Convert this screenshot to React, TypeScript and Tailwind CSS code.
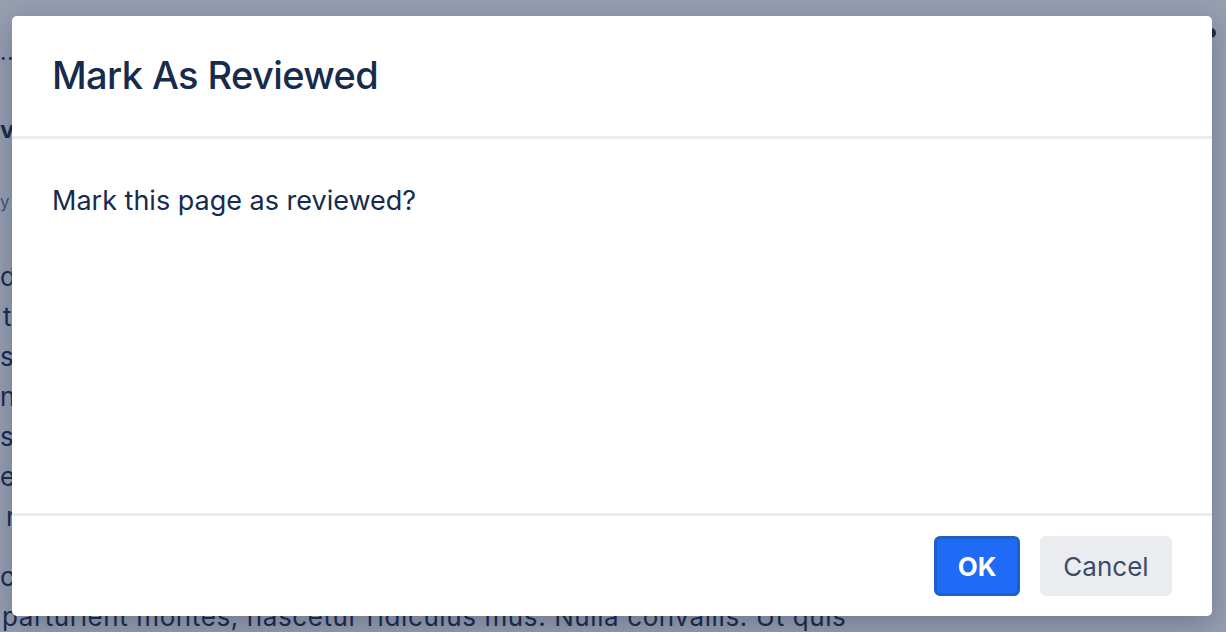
const bodyLines = [
  { t: 'd sit amet, consectetur adipiscing elit. Integer nec odio.', pl: '' },
  { t: 'tincidunt sem at nibh elementum imperdiet. Duis sagittis.', pl: 'pl-[3px]' },
  { t: 'sed augue semper porta. Mauris massa. Vestibulum lacinia.', pl: '' },
  { t: 'nunc sit amet, aliquet tortor. Vivamus in erat ut urna.', pl: '' },
  { t: 'sociosqu ad litora torquent per conubia nostra, per inceptos.', pl: '' },
  { t: 'eros tortor, tincidunt vitae, dapibus nec, ultricies quis.', pl: '' },
  { t: 'rhoncus dui vel sem. Sed sagittis.', pl: 'pl-[6px]' },
];

export default function App() {
  return (
    <div className="relative h-[632px] w-full overflow-hidden bg-[#979eb0] font-['Inter','Liberation_Sans',sans-serif]">
      {/* page behind the modal */}
      <div className="flex flex-col text-[#1d2b4c]">
        <div className="flex h-[66px] items-start justify-between">
          <span className="mt-[41px] text-[22px] leading-none tracking-[1px]">...</span>
          <span className="mr-[10px] mt-[28px] h-[10px] w-[10px] rounded-full bg-[#1d2b4c]" />
        </div>
        <div className="mt-[48px] text-[24px] font-bold leading-[32px]">v</div>
        <div className="mt-[44px] text-[17px] leading-[24px] text-[#4b5670]">y</div>
        <div className="mt-[43px] flex flex-col text-[26px] leading-[40px]">
          {bodyLines.map((l) => (
            <div key={l.t} className={`whitespace-nowrap ${l.pl}`}>
              {l.t}
            </div>
          ))}
        </div>
        <div className="mt-[20px] flex flex-col text-[26px] leading-[40px]">
          <div className="whitespace-nowrap">cum sociis natoque penatibus et magnis dis</div>
          <div className="whitespace-nowrap pl-[2px] tracking-[0.6px]">
            parturient montes, nascetur ridiculus mus. Nulla convallis. Ut quis
          </div>
        </div>
      </div>

      {/* modal */}
      <div className="absolute left-[12px] top-[16px] flex h-[600px] w-[1200px] flex-col rounded-[5px] bg-white shadow-[0_8px_28px_rgba(9,30,66,0.28)]">
        <div className="flex h-[123px] items-center border-b-[3px] border-[#ebecf0] px-10 pb-[3px]">
          <h1 className="text-[38px] font-medium leading-[48px] tracking-[-0.6px] text-[#172b4d]">
            Mark As Reviewed
          </h1>
        </div>
        <div className="flex-1 px-10 pt-[42px]">
          <p className="text-[27px] leading-[40px] text-[#172b4d]">Mark this page as reviewed?</p>
        </div>
        <div className="flex items-center justify-end gap-5 border-t-[3px] border-[#ebecf0] px-10 py-5">
          <button
            type="button"
            className="flex h-[60px] w-[86px] items-center justify-center rounded-[6px] border-[3px] border-[#1f5fca] bg-[#1f6bf5] text-[26px] font-bold text-white"
          >
            OK
          </button>
          <button
            type="button"
            className="flex h-[60px] w-[132px] items-center justify-center rounded-[6px] bg-[#ebecf0] text-[26px] text-[#3d4c68]"
          >
            Cancel
          </button>
        </div>
      </div>
    </div>
  );
}
